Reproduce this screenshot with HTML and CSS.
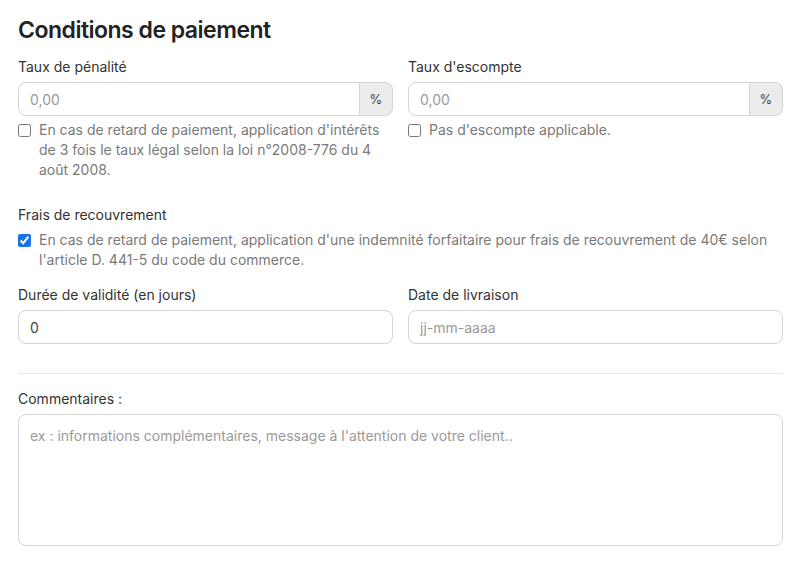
FILE: index.html
```html
<!DOCTYPE html>
<html lang="fr">
<head>
    <meta charset="UTF-8">
    <meta name="viewport" content="width=device-width, initial-scale=1.0">
    <title>Conditions de paiement</title>
    <link rel="stylesheet" href="styles.css">
</head>
<body>
    <div class="container">
        <h2>Conditions de paiement</h2>
        <div class="form-grid">
            <div class="field">
                <label for="penalite">Taux de pénalité</label>
                <div class="input-group">
                    <input type="text" id="penalite" placeholder="0,00">
                    <span class="addon">%</span>
                </div>
                <label class="check">
                    <input type="checkbox">
                    <span>En cas de retard de paiement, application d'intérêts de 3 fois le taux légal selon la loi n°2008-776 du 4 août 2008.</span>
                </label>
            </div>
            <div class="field">
                <label for="escompte">Taux d'escompte</label>
                <div class="input-group">
                    <input type="text" id="escompte" placeholder="0,00">
                    <span class="addon">%</span>
                </div>
                <label class="check">
                    <input type="checkbox">
                    <span>Pas d'escompte applicable.</span>
                </label>
            </div>
        </div>

        <div class="block">
            <div class="label">Frais de recouvrement</div>
            <label class="check">
                <input type="checkbox" checked>
                <span>En cas de retard de paiement, application d'une indemnité forfaitaire pour frais de recouvrement de 40€ selon l'article D. 441-5 du code du commerce.</span>
            </label>
        </div>

        <div class="form-grid">
            <div class="field">
                <label for="validite">Durée de validité (en jours)</label>
                <input type="text" id="validite" value="0">
            </div>
            <div class="field">
                <label for="livraison">Date de livraison</label>
                <input type="text" id="livraison" placeholder="jj-mm-aaaa">
            </div>
        </div>

        <hr>

        <label for="commentaires">Commentaires :</label>
        <textarea id="commentaires" placeholder="ex : informations complémentaires, message à l'attention de votre client.."></textarea>
    </div>
</body>
</html>
```
FILE: styles.css
```css
body {
    font-family: Inter, "Liberation Sans", sans-serif;
    background-color: #fff;
    margin: 0;
    padding: 0;
    color: #333;
}
.container {
    padding: 15px 18px 0;
}
h2 {
    margin: 0 0 12px;
    font-size: 23px;
    line-height: 30px;
    font-weight: 600;
    letter-spacing: -0.5px;
    color: #222;
}
label,
.label {
    display: block;
    font-size: 14px;
    line-height: 20px;
    margin-bottom: 5px;
}
.form-grid {
    display: grid;
    grid-template-columns: repeat(2, 1fr);
    grid-gap: 15px;
}
input[type="text"],
textarea {
    width: 100%;
    height: 34px;
    padding: 6px 11px;
    border: 1px solid #d4d4d4;
    border-radius: 8px;
    font-family: inherit;
    font-size: 14px;
    color: #444;
    background-color: #fff;
    box-sizing: border-box;
}
input::placeholder,
textarea::placeholder {
    color: #9a9a9a;
}
.input-group {
    display: flex;
}
.input-group input[type="text"] {
    border-radius: 8px 0 0 8px;
}
.addon {
    width: 33px;
    flex-shrink: 0;
    display: flex;
    align-items: center;
    justify-content: center;
    background-color: #ececec;
    border: 1px solid #d4d4d4;
    border-left: none;
    border-radius: 0 8px 8px 0;
    font-size: 13px;
    color: #444;
    box-sizing: border-box;
}
.check {
    display: flex;
    align-items: flex-start;
    gap: 8px;
    margin: 4px 0 0;
    color: #7a7a7a;
}
.check input {
    width: 13px;
    height: 13px;
    margin: 4px 0 0;
    flex-shrink: 0;
    accent-color: #1a73e8;
}
.block {
    margin: 25px 0 15px;
}
.block .check {
    margin-top: 0;
}
hr {
    border: none;
    border-top: 1px solid #ececec;
    margin: 29px 0 15px;
}
textarea {
    height: 132px;
    padding: 12px 11px;
    resize: none;
    display: block;
}
```
